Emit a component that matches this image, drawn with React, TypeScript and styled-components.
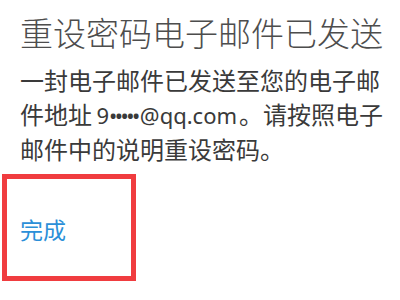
import React from 'react'
import styled, { createGlobalStyle } from 'styled-components'

const Global = createGlobalStyle`
    html, body {
        margin: 0;
        padding: 0;
        background: #ffffff;
    }
    body {
        font-family: "Noto Sans CJK SC", "Noto Sans", sans-serif;
    }
`

const S = {
    Page: styled.div`
        width: 400px;
        height: 300px;
        overflow: hidden;
        background: #ffffff;
        display: flex;
        flex-direction: column;
        padding: 12px 0 0 20px;
        box-sizing: border-box;
    `,
    Title: styled.h1`
        margin: 0;
        font-size: 33px;
        line-height: 40px;
        font-weight: 300;
        color: #4d4d4d;
        white-space: nowrap;
    `,
    Message: styled.p`
        margin: 11px 0 0;
        font-size: 24px;
        line-height: 34px;
        font-weight: 400;
        color: #3a3a3a;
        white-space: nowrap;
    `,
    Email: styled.span`
        font-family: "Noto Sans", "Noto Sans CJK SC", sans-serif;
        font-size: 22px;
        margin: 0 2px 0 -1px;
    `,
    Dots: styled.span`
        letter-spacing: -2.5px;
        margin-right: 2px;
    `,
    Highlight: styled.div`
        margin: 8px 0 0 -18px;
        width: 134px;
        height: 107px;
        box-sizing: border-box;
        border: 5px solid #f03c3f;
        padding: 35px 0 0 13px;
    `,
    DoneButton: styled.button`
        border: none;
        background: none;
        padding: 0;
        font-family: "Noto Sans CJK SC", "Noto Sans", sans-serif;
        font-size: 23px;
        line-height: 30px;
        color: #2b8fd8;
        cursor: pointer;
    `
}

const App = () => {
    return <>
        <Global />
        <S.Page>
            <S.Title>重设密码电子邮件已发送</S.Title>
            <S.Message>
                一封电子邮件已发送至您的电子邮<br />
                件地址 <S.Email>9<S.Dots>•••••</S.Dots>@qq.com</S.Email>。请按照电子<br />
                邮件中的说明重设密码。
            </S.Message>
            <S.Highlight>
                <S.DoneButton>完成</S.DoneButton>
            </S.Highlight>
        </S.Page>
    </>
}

export default App
